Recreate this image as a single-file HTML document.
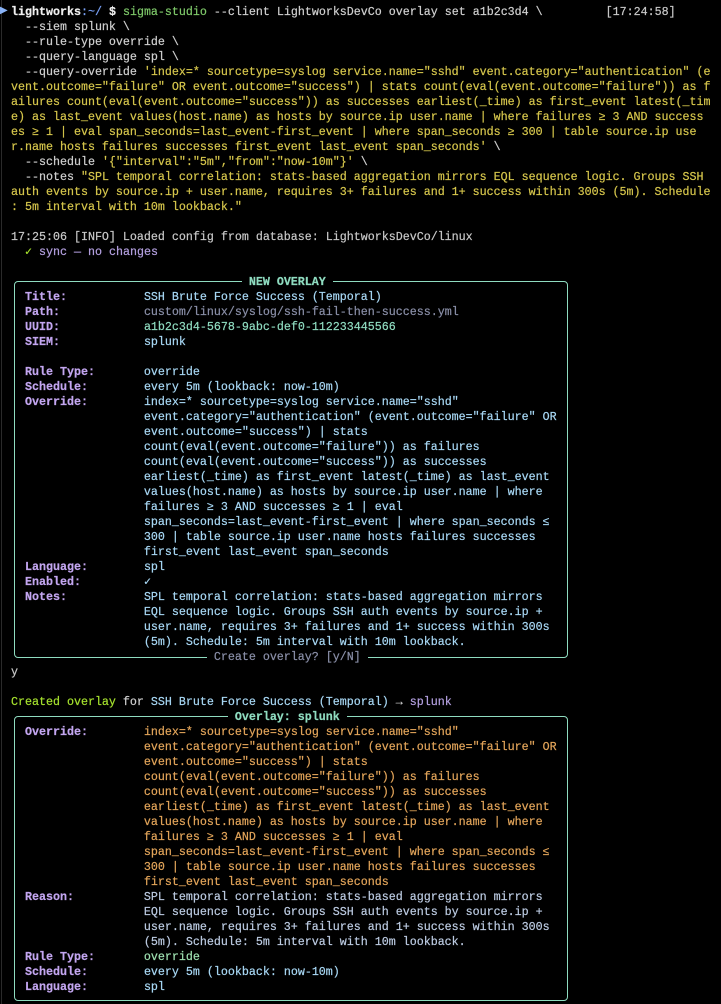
<!DOCTYPE html>
<html><head><meta charset="utf-8"><style>
html,body{margin:0;padding:0;background:#000;width:721px;height:1004px;overflow:hidden}
pre{position:absolute;left:11px;top:4.5px;margin:0;font-family:"Liberation Mono","DejaVu Sans Mono",monospace;font-size:11.67px;line-height:15px;color:#d0d0d0;z-index:2;white-space:pre;-webkit-text-stroke:0.2px currentColor}
.box{position:absolute;border:1px solid #8fdcc0;border-radius:4px;z-index:1}
.w{color:#f0f0f0;font-weight:bold}.bl{color:#7aa2f7}.g{color:#7fc96a}.y{color:#d6c64c}.gr{color:#c8c8c8}
.ck{color:#a6e22e}.lv{color:#b4a0e0}.lb{color:#c3a6f0;font-weight:bold}.v{color:#a8d8f5}.p{color:#8a8fa8}
.u{color:#8fdcc0}.mt{color:#8fdcc0;font-weight:bold;background:#000}.bg{background:#000}.o{color:#e3a55a}.r{color:#bccbe2}.ov{color:#9ee0b0}
.arrow{position:absolute;left:0;top:5px;font-size:10px;color:#8ab4f8;font-family:"DejaVu Sans",sans-serif;z-index:3}
.side{position:absolute;left:1px;top:0;width:1px;height:1004px;background:#2a2a2a}
</style></head><body>
<div class="side"></div>
<div class="arrow">▶</div>
<div class="box" style="left:14px;top:281px;width:552px;height:375px"></div>
<div class="box" style="left:14px;top:716px;width:552px;height:283px"></div>
<pre><span class="w">lightworks</span><span class="bl">:~/</span> <span class="w">$</span> <span class="g">sigma-studio</span> --client LightworksDevCo overlay set a1b2c3d4 \         <span class="gr">[17:24:58]</span>
  --siem splunk \
  --rule-type override \
  --query-language spl \
  --query-override <span class="y">'index=* sourcetype=syslog service.name="sshd" event.category="authentication" (e</span>
<span class="y">vent.outcome="failure" OR event.outcome="success") | stats count(eval(event.outcome="failure")) as f</span>
<span class="y">ailures count(eval(event.outcome="success")) as successes earliest(_time) as first_event latest(_tim</span>
<span class="y">e) as last_event values(host.name) as hosts by source.ip user.name | where failures ≥ 3 AND success</span>
<span class="y">es ≥ 1 | eval span_seconds=last_event-first_event | where span_seconds ≥ 300 | table source.ip use</span>
<span class="y">r.name hosts failures successes first_event last_event span_seconds'</span> \
  --schedule <span class="y">'{"interval":"5m","from":"now-10m"}'</span> \
  --notes <span class="y">"SPL temporal correlation: stats-based aggregation mirrors EQL sequence logic. Groups SSH</span>
<span class="y">auth events by source.ip + user.name, requires 3+ failures and 1+ success within 300s (5m). Schedule</span>
<span class="y">: 5m interval with 10m lookback."</span>

<span class="gr">17:25:06 [INFO] Loaded config from database: LightworksDevCo/linux</span>
  <span class="ck">✓</span> <span class="lv">sync — no changes</span>

                                 <span class="mt"> NEW OVERLAY </span>
  <span class="lb">Title:</span>           <span class="v">SSH Brute Force Success (Temporal)</span>
  <span class="lb">Path:</span>            <span class="p">custom/linux/syslog/ssh-fail-then-success.yml</span>
  <span class="lb">UUID:</span>            <span class="u">a1b2c3d4-5678-9abc-def0-112233445566</span>
  <span class="lb">SIEM:</span>            <span class="v">splunk</span>

  <span class="lb">Rule Type:</span>       <span class="v">override</span>
  <span class="lb">Schedule:</span>        <span class="v">every 5m (lookback: now-10m)</span>
  <span class="lb">Override:</span>        <span class="v">index=* sourcetype=syslog service.name="sshd"</span>
                   <span class="v">event.category="authentication" (event.outcome="failure" OR</span>
                   <span class="v">event.outcome="success") | stats</span>
                   <span class="v">count(eval(event.outcome="failure")) as failures</span>
                   <span class="v">count(eval(event.outcome="success")) as successes</span>
                   <span class="v">earliest(_time) as first_event latest(_time) as last_event</span>
                   <span class="v">values(host.name) as hosts by source.ip user.name | where</span>
                   <span class="v">failures ≥ 3 AND successes ≥ 1 | eval</span>
                   <span class="v">span_seconds=last_event-first_event | where span_seconds ≤</span>
                   <span class="v">300 | table source.ip user.name hosts failures successes</span>
                   <span class="v">first_event last_event span_seconds</span>
  <span class="lb">Language:</span>        <span class="v">spl</span>
  <span class="lb">Enabled:</span>         <span class="v">✓</span>
  <span class="lb">Notes:</span>           <span class="v">SPL temporal correlation: stats-based aggregation mirrors</span>
                   <span class="v">EQL sequence logic. Groups SSH auth events by source.ip +</span>
                   <span class="v">user.name, requires 3+ failures and 1+ success within 300s</span>
                   <span class="v">(5m). Schedule: 5m interval with 10m lookback.</span>
                            <span class="p bg"> Create overlay? [y/N] </span>
<span class="gr">y</span>

<span class="ck">Created overlay</span> for <span class="v">SSH Brute Force Success (Temporal)</span> → <span class="lv">splunk</span>
                               <span class="mt"> Overlay: splunk </span>
  <span class="lb">Override:</span>        <span class="o">index=* sourcetype=syslog service.name="sshd"</span>
                   <span class="o">event.category="authentication" (event.outcome="failure" OR</span>
                   <span class="o">event.outcome="success") | stats</span>
                   <span class="o">count(eval(event.outcome="failure")) as failures</span>
                   <span class="o">count(eval(event.outcome="success")) as successes</span>
                   <span class="o">earliest(_time) as first_event latest(_time) as last_event</span>
                   <span class="o">values(host.name) as hosts by source.ip user.name | where</span>
                   <span class="o">failures ≥ 3 AND successes ≥ 1 | eval</span>
                   <span class="o">span_seconds=last_event-first_event | where span_seconds ≤</span>
                   <span class="o">300 | table source.ip user.name hosts failures successes</span>
                   <span class="o">first_event last_event span_seconds</span>
  <span class="lb">Reason:</span>          <span class="r">SPL temporal correlation: stats-based aggregation mirrors</span>
                   <span class="r">EQL sequence logic. Groups SSH auth events by source.ip +</span>
                   <span class="r">user.name, requires 3+ failures and 1+ success within 300s</span>
                   <span class="r">(5m). Schedule: 5m interval with 10m lookback.</span>
  <span class="lb">Rule Type:</span>       <span class="ov">override</span>
  <span class="lb">Schedule:</span>        <span class="v">every 5m (lookback: now-10m)</span>
  <span class="lb">Language:</span>        <span class="v">spl</span></pre>
</body></html>
